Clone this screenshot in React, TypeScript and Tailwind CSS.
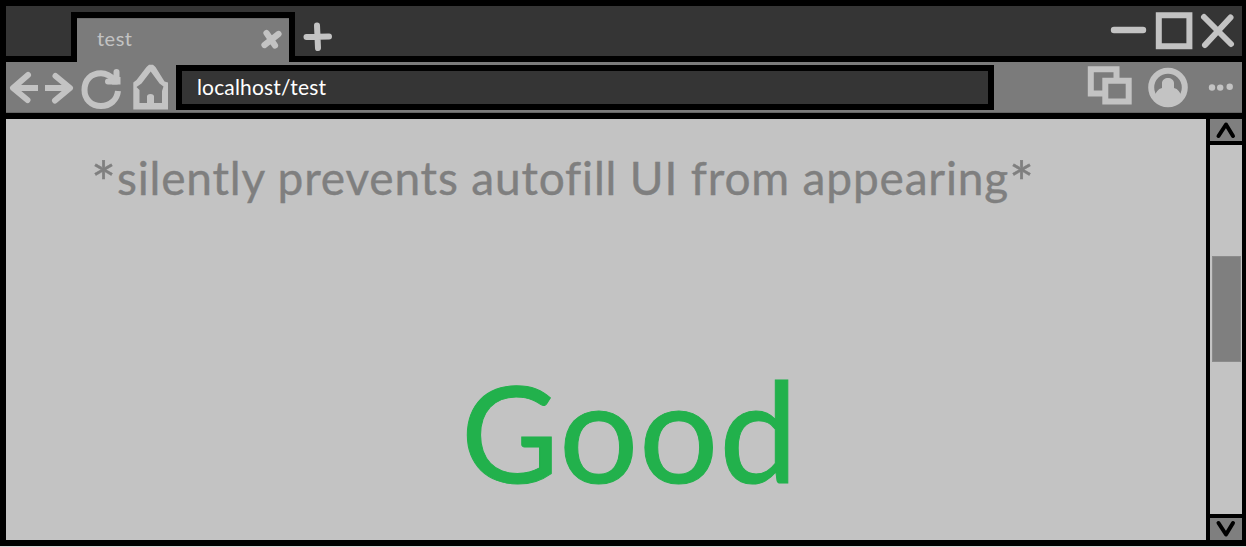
import type { ReactNode } from "react";

const LIGHT = "#c3c3c3";

function Icon({ box, label, children }: { box: [number, number, number, number]; label: string; children: ReactNode }) {
  return (
    <svg
      role="img"
      aria-label={label}
      className="block shrink-0"
      width={box[2]}
      height={box[3]}
      viewBox={box.join(" ")}
      fill="none"
      stroke={LIGHT}
      strokeWidth={6}
      strokeLinecap="round"
      strokeLinejoin="round"
    >
      {children}
    </svg>
  );
}

function TitleBar() {
  return (
    <div className="flex h-[56px] shrink-0 items-stretch bg-black">
      <div className="mt-[6px] h-[50px] w-[65px] bg-[#353535]" />
      <div className="flex h-[62px] w-[224px] shrink-0 flex-col bg-black">
        <div className="mt-[6px] h-[6px] shrink-0 bg-[#353535]" />
        <div className="mx-[6px] mt-[6px] flex h-[44px] shrink-0 items-start justify-between border-t border-[#6c6c6c] bg-[#7b7b7b] pl-[20px]">
          <span className="pt-[7px] font-['Lato'] text-[20px] leading-[24px] tracking-[0.5px] text-[#c3c3c3]">test</span>
          <Icon box={[257, 19, 32, 43]} label="Close tab">
            <path d="M266.500 33L275 45.500M278.500 34L264.500 45" strokeWidth={6.2} />
          </Icon>
        </div>
      </div>
      <div className="mt-[6px] flex h-[50px] flex-1 justify-between bg-[#353535]">
        <Icon box={[295, 6, 44, 50]} label="New tab">
          <path d="M306.500 37L329 36.500M317 25.500L318 48" />
        </Icon>
        <div className="flex">
          <Icon box={[1100, 6, 48, 50]} label="Minimize">
            <path d="M1114 30H1143" strokeWidth={6.4} />
          </Icon>
          <Icon box={[1148, 6, 50, 50]} label="Maximize">
            <path d="M1158.800 15.200H1189.400V46.300H1158.800Z" strokeLinejoin="miter" />
          </Icon>
          <Icon box={[1198, 6, 44, 50]} label="Close">
            <path d="M1204 17L1231 44M1230.500 17.500L1205 45" />
          </Icon>
        </div>
      </div>
    </div>
  );
}

function Toolbar() {
  return (
    <div className="mt-[6px] flex h-[51px] shrink-0 border-b border-[#656565] bg-[#7b7b7b]">
      <Icon box={[6, 62, 37, 50]} label="Back">
        <path d="M38 88H14" strokeLinecap="butt" />
        <path d="M28 75L13 88L27.500 100" />
      </Icon>
      <Icon box={[43, 62, 35, 50]} label="Forward">
        <path d="M45 88H69" strokeLinecap="butt" />
        <path d="M55.500 76L70 88L55 100.500" />
      </Icon>
      <Icon box={[78, 62, 50, 50]} label="Reload">
        <path d="M118 91C117 100 110 106 101 106C91 106 84.500 99 84.500 90C84.500 80 91 73.300 101 73.300C107 73.300 111 76 115.500 81" strokeLinecap="butt" />
        <path d="M116.500 72V81.500H108" strokeWidth={6} />
        <path d="M115 77H120.500V84.500H112Z" fill={LIGHT} stroke="none" />
      </Icon>
      <Icon box={[128, 62, 48, 50]} label="Home">
        <path
          fill={LIGHT}
          stroke="none"
          fillRule="evenodd"
          d="M149 64.800H153L155.500 67L164.500 81.500L168 82.500V109.500H133.300V82.500L136.500 80L146.500 67ZM150.700 71.500L159.500 83.500L163.500 86.500L162 91V103H154V96.500Q154 94 150.500 94Q147 94 147 96.500V103H139.500V90L136.500 87L141.500 83.500Z"
        />
      </Icon>
      <div className="mt-[3px] flex h-[45px] w-[818px] shrink-0 items-center border-[6px] border-black bg-[#353535] pb-[1px] pl-[15px] font-['Lato'] text-[21px] leading-[24px] text-white">
        <span className="tracking-[0.15px]">localhost/test</span>
      </div>
      <div className="flex flex-1 justify-end">
        <Icon box={[1084, 62, 54, 50]} label="Windows">
          <path d="M1090.800 69.300H1116.500V93.500H1090.800Z" strokeLinejoin="miter" />
          <path d="M1105.300 80.800H1128.700V101.500H1105.300Z" fill="#7b7b7b" strokeLinejoin="miter" />
        </Icon>
        <Icon box={[1138, 62, 60, 50]} label="Account">
          <circle cx="1168" cy="87.500" r="16.800" strokeWidth={6} />
          <path d="M1162 83C1162 80 1165 78 1168 78C1171 78 1174 80 1174 83V88C1178 89 1180 92 1181.500 96L1175 104H1161L1154.500 96C1156 92 1158 89 1162 88Z" fill={LIGHT} stroke="none" />
        </Icon>
        <Icon box={[1198, 62, 44, 50]} label="Menu">
          <g fill={LIGHT} stroke="none">
            <circle cx="1212" cy="87.500" r="3.200" />
            <circle cx="1220.200" cy="87.600" r="3.200" />
            <circle cx="1229.700" cy="86.700" r="3.200" />
          </g>
        </Icon>
      </div>
    </div>
  );
}

function Scrollbar() {
  return (
    <div className="flex w-[32px] shrink-0 flex-col gap-[4px] bg-black">
      <div className="h-[22px] shrink-0 bg-[#7f7f7f]">
        <svg className="block" width="32" height="22" fill="none" stroke="black" strokeWidth="4" strokeLinecap="round" strokeLinejoin="round">
          <path d="M8.500 17L16 5.500L23 17" />
        </svg>
      </div>
      <div className="flex-1 bg-[#c3c3c3] pt-[111px] pr-[1px] pl-[2px]">
        <div className="h-[106px] border border-[#8b8b8b] bg-[#7f7f7f]" />
      </div>
      <div className="h-[22px] shrink-0 bg-[#7f7f7f]">
        <svg className="block" width="32" height="22" fill="none" stroke="black" strokeWidth="4" strokeLinecap="round" strokeLinejoin="round">
          <path d="M8.500 5L16 16.500L23 5" />
        </svg>
      </div>
    </div>
  );
}

export default function App() {
  return (
    <div className="h-[547px] w-[1246px] overflow-hidden border-b border-[#d5d5d5] bg-black">
      <div className="flex h-[546px] flex-col pr-[4px] pb-[6px] pl-[6px]">
        <TitleBar />
        <Toolbar />
        <div className="mt-[6px] flex flex-1 gap-[4px]">
          <main className="flex w-[1200px] flex-col overflow-hidden bg-[#c3c3c3] font-['Lato'] whitespace-nowrap">
            <p className="mt-[29px] ml-[85px] h-[60px] text-[46px] leading-[60px] tracking-[0.83px] text-[#7f7f7f] [-webkit-text-stroke:0.4px_#7f7f7f]">
              <span className="align-[-9px] text-[59px] leading-[0px]">*</span>
              silently prevents autofill UI from appearing
              <span className="align-[-9px] text-[59px] leading-[0px]">*</span>
            </p>
            <h1 className="mt-[131px] ml-[455px] h-[180px] text-[140px] leading-[180px] tracking-[0.8px] text-[#22b14c] [-webkit-text-stroke:1px_#22b14c]">
              <span className="text-[134px] leading-[0px] tracking-[0px]">G</span>ood
            </h1>
          </main>
          <Scrollbar />
        </div>
      </div>
    </div>
  );
}
